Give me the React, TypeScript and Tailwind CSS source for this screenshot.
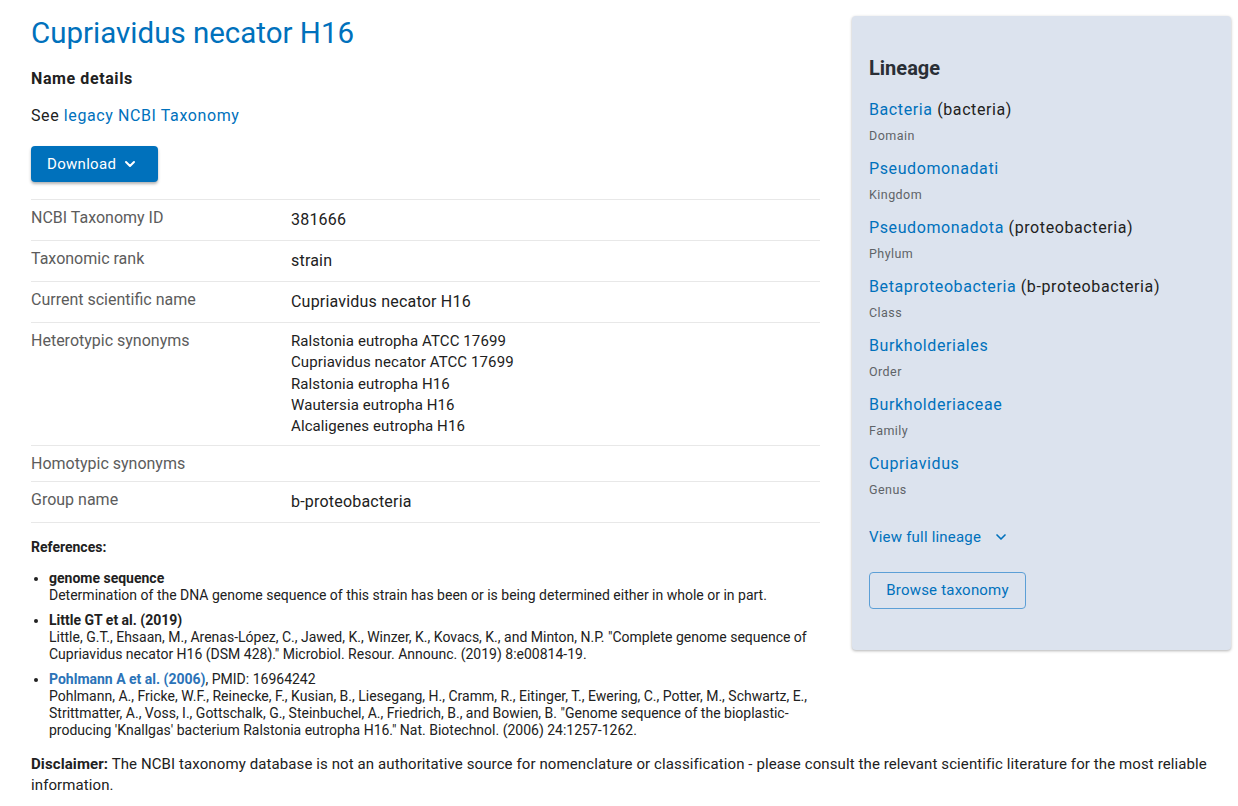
import { ChevronDown } from "lucide-react";

const rows: { label: string; values: string[]; small?: boolean }[] = [
  { label: "NCBI Taxonomy ID", values: ["381666"] },
  { label: "Taxonomic rank", values: ["strain"] },
  { label: "Current scientific name", values: ["Cupriavidus necator H16"] },
  {
    label: "Heterotypic synonyms",
    values: [
      "Ralstonia eutropha ATCC 17699",
      "Cupriavidus necator ATCC 17699",
      "Ralstonia eutropha H16",
      "Wautersia eutropha H16",
      "Alcaligenes eutropha H16",
    ],
    small: true,
  },
  { label: "Homotypic synonyms", values: [] },
  { label: "Group name", values: ["b-proteobacteria"] },
];

const lineage = [
  { name: "Bacteria", common: "(bacteria)", rank: "Domain" },
  { name: "Pseudomonadati", rank: "Kingdom" },
  { name: "Pseudomonadota", common: "(proteobacteria)", rank: "Phylum" },
  { name: "Betaproteobacteria", common: "(b-proteobacteria)", rank: "Class" },
  { name: "Burkholderiales", rank: "Order" },
  { name: "Burkholderiaceae", rank: "Family" },
  { name: "Cupriavidus", rank: "Genus" },
];

export default function App() {
  return (
    <div className="min-h-screen bg-white font-['Roboto',sans-serif] text-[#212121]">
      <div className="flex gap-8 pl-[31px] pr-[7px]">
        <main className="w-[789px] shrink-0">
          <h1 className="pt-[15px] text-[29.5px] leading-[36px] text-[#0071bc]">Cupriavidus necator H16</h1>
          <h2 className="mt-[16px] text-base leading-6 font-bold tracking-[0.6px]">Name details</h2>
          <p className="mt-[13px] text-base leading-6 tracking-[0.6px]">
            See <a className="text-[#0071bc]">legacy NCBI Taxonomy</a>
          </p>
          <button className="mt-[18px] flex h-9 w-[127px] items-center gap-1.5 rounded bg-[#0071bc] pl-4 text-[15px] tracking-[0.3px] text-white shadow-[0_2px_3px_rgba(0,0,0,0.3)]">
            Download
            <ChevronDown className="h-4 w-4" strokeWidth={3} />
          </button>

          <div className="mt-[17px] border-b border-[#e8e8e8]">
            {rows.map((row) => (
              <div key={row.label} className="flex items-start border-t border-[#e8e8e8] pt-[6px] pb-[5px]">
                <div className="w-[260px] text-base leading-6 text-[#5c5c5c]">{row.label}</div>
                {row.values.length === 0 ? null : row.small ? (
                  <div className="pt-[2px] pb-[3px] text-[15px] leading-[21.3px] tracking-[0.1px]">
                    {row.values.map((v) => (
                      <div key={v}>{v}</div>
                    ))}
                  </div>
                ) : (
                  <div className="pt-[2px] pb-[3px] text-base leading-6 tracking-[0.2px]">{row.values.join("")}</div>
                )}
              </div>
            ))}
          </div>

          <h3 className="mt-[16px] text-sm leading-[17px] font-bold">References:</h3>
          <ul className="mt-[14px] list-disc space-y-[8px] pl-[18px] text-[14px] leading-[17px]">
            <li>
              <b>genome sequence</b>
              <br />
              Determination of the DNA genome sequence of this strain has been or is being determined either in whole or in part.
            </li>
            <li>
              <b>Little GT et al. (2019)</b>
              <br />
              Little, G.T., Ehsaan, M., Arenas-López, C., Jawed, K., Winzer, K., Kovacs, K., and Minton, N.P. "Complete genome sequence of
              Cupriavidus necator H16 (DSM 428)." Microbiol. Resour. Announc. (2019) 8:e00814-19.
            </li>
            <li>
              <a className="font-bold text-[#2b73b8]">Pohlmann A et al. (2006)</a>, PMID: 16964242
              <br />
              Pohlmann, A., Fricke, W.F., Reinecke, F., Kusian, B., Liesegang, H., Cramm, R., Eitinger, T., Ewering, C., Potter, M., Schwartz, E.,
              Strittmatter, A., Voss, I., Gottschalk, G., Steinbuchel, A., Friedrich, B., and Bowien, B. "Genome sequence of the bioplastic-
              producing 'Knallgas' bacterium Ralstonia eutropha H16." Nat. Biotechnol. (2006) 24:1257-1262.
            </li>
          </ul>
        </main>

        <aside className="mt-4 h-[634px] w-[379px] shrink-0 rounded bg-[#dce3ee] px-[17px] pt-[40px] shadow-[0_1px_3px_rgba(0,0,0,0.3)]">
          <h2 className="text-[20px] leading-6 font-bold text-[#2a2f36]">Lineage</h2>
          <div className="mt-[20px]">
            {lineage.map((l) => (
              <div key={l.name} className="h-[59px]">
                <div className="text-base leading-[20px] tracking-[0.6px]">
                  <a className="text-[#0071bc]">{l.name}</a>
                  {l.common && <span> {l.common}</span>}
                </div>
                <div className="mt-[8px] text-[12.5px] leading-4 tracking-[0.45px] text-[#5f6368]">{l.rank}</div>
              </div>
            ))}
          </div>
          <button className="mt-[14px] flex items-center gap-3 text-[15px] leading-5 tracking-[0.2px] text-[#0071bc]">
            View full lineage
            <ChevronDown className="h-4 w-4" strokeWidth={2.5} />
          </button>
          <button className="mt-[25px] h-[37px] w-[157px] rounded border border-[#5c9fd6] text-[15px] tracking-[0.2px] text-[#0071bc]">
            Browse taxonomy
          </button>
        </aside>
      </div>

      <p className="mt-[15px] pl-[31px] pr-[20px] text-[15px] leading-[21px] tracking-[0.1px]">
        <b>Disclaimer:</b> The NCBI taxonomy database is not an authoritative source for nomenclature or classification - please consult the relevant scientific literature for the most reliable
        information.
      </p>
    </div>
  );
}
